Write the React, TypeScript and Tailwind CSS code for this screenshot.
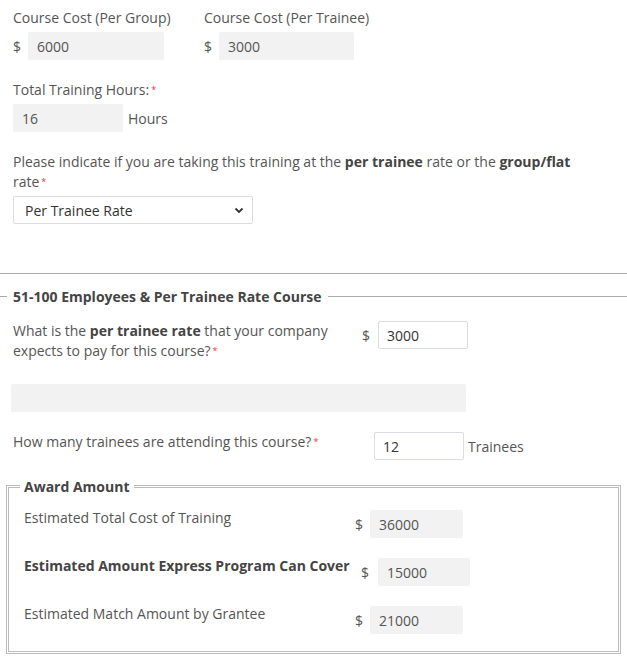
import React from "react";

const font = { fontFamily: '"Open Sans", "Noto Sans", sans-serif' };

function Req() {
  return <span className="ml-0.5 align-top text-[9px] text-red-500">*</span>;
}

function GreyBox({ value, w }: { value: string; w: string }) {
  return (
    <div className={`flex h-[28px] items-center rounded-[2px] bg-[#f2f2f2] px-[9px] text-[14px] text-[#555] ${w}`}>
      {value}
    </div>
  );
}

function WhiteBox({ value, w }: { value: string; w: string }) {
  return (
    <div className={`flex h-[28px] items-center rounded-[2px] border border-[#d9dce6] bg-white px-[8px] text-[14px] text-[#333] ${w}`}>
      {value}
    </div>
  );
}

export default function App() {
  return (
    <div className="w-[627px] h-[660px] overflow-hidden bg-white text-[14px] text-[#555]" style={font}>
      <div className="px-[13px] pt-[8px]">
        <div className="flex">
          <div className="w-[191px]">
            <div className="leading-[20px]">Course Cost (Per Group)</div>
            <div className="mt-[4px] flex items-center">
              <span className="w-[15px]">$</span>
              <GreyBox value="6000" w="w-[136px]" />
            </div>
          </div>
          <div>
            <div className="leading-[20px]">Course Cost (Per Trainee)</div>
            <div className="mt-[4px] flex items-center">
              <span className="w-[15px]">$</span>
              <GreyBox value="3000" w="w-[135px]" />
            </div>
          </div>
        </div>

        <div className="mt-[20px] leading-[20px]">
          Total Training Hours:<Req />
        </div>
        <div className="mt-[4px] flex items-center gap-[5px]">
          <GreyBox value="16" w="w-[110px]" />
          <span>Hours</span>
        </div>

        <p className="mt-[20px] w-[585px] leading-[20px]">
          Please indicate if you are taking this training at the{" "}
          <b className="font-bold text-[#444]">per trainee</b> rate or the{" "}
          <b className="font-bold text-[#444]">group/flat</b> rate<Req />
        </p>
        <div className="mt-[4px] flex h-[28px] w-[240px] items-center justify-between rounded-[2px] border border-[#d9dce6] bg-white pl-[11px] pr-[8px] text-[#333]">
          <span>Per Trainee Rate</span>
          <svg width="10" height="10" viewBox="0 0 10 10">
            <path d="M1.5 3.5 L5 7 L8.5 3.5" fill="none" stroke="#333" strokeWidth="1.8" />
          </svg>
        </div>
      </div>

      <div className="mt-[49px] border-t border-[#aaa]" />

      <fieldset className="mt-[12px] border-t border-[#aaa] px-[13px]">
        <legend className="-ml-[6px] px-[6px] text-[14px] font-bold text-[#444]">
          51-100 Employees &amp; Per Trainee Rate Course
        </legend>
        <div className="mt-[14px] flex">
          <p className="w-[349px] leading-[20px]">
            What is the <b className="font-bold text-[#444]">per trainee rate</b> that your company expects to pay for this course?<Req />
          </p>
          <div className="flex items-center self-start">
            <span className="w-[16px]">$</span>
            <WhiteBox value="3000" w="w-[90px]" />
          </div>
        </div>
        <div className="-ml-[2px] mt-[23px] h-[28px] w-[455px] rounded-[2px] bg-[#f2f2f2]" />
        <div className="mt-[20px] flex">
          <div className="w-[361px] leading-[20px]">
            How many trainees are attending this course?<Req />
          </div>
          <div className="flex items-center gap-[4px]">
            <WhiteBox value="12" w="w-[90px]" />
            <span className="pt-[1px]">Trainees</span>
          </div>
        </div>
      </fieldset>

      <fieldset className="mx-[6px] mt-[16px] h-[178px] border-[3px] border-double border-[#bbb] px-[15px]">
        <legend className="-ml-[4px] px-[4px] text-[14px] font-bold text-[#444]">Award Amount</legend>
        <div className="mt-[11px] flex">
          <div className="w-[331px] leading-[20px]">Estimated Total Cost of Training</div>
          <div className="mt-[2px] flex items-center">
            <span className="w-[15px]">$</span>
            <GreyBox value="36000" w="w-[93px]" />
          </div>
        </div>
        <div className="mt-[18px] flex">
          <div className="w-[337px] font-bold leading-[20px] text-[#444]">Estimated Amount Express Program Can Cover</div>
          <div className="mt-[2px] flex items-center">
            <span className="w-[17px]">$</span>
            <GreyBox value="15000" w="w-[92px]" />
          </div>
        </div>
        <div className="mt-[18px] flex">
          <div className="w-[331px] leading-[20px]">Estimated Match Amount by Grantee</div>
          <div className="mt-[2px] flex items-center">
            <span className="w-[15px]">$</span>
            <GreyBox value="21000" w="w-[93px]" />
          </div>
        </div>
      </fieldset>
    </div>
  );
}
